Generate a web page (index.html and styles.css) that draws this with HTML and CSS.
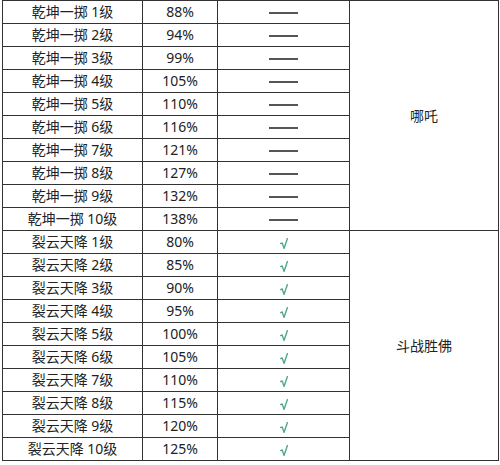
FILE: index.html
```html
<!DOCTYPE html>
<html lang="zh">
<head>
<meta charset="utf-8">
<link rel="stylesheet" href="styles.css">
</head>
<body>
<table class="skills">
<colgroup><col class="c1"><col class="c2"><col class="c3"><col class="c4"></colgroup>
<tbody>
<tr><td>乾坤一掷 1级</td><td>88%</td><td><span class="dash"></span></td><td rowspan="10" class="who">哪吒</td></tr>
<tr><td>乾坤一掷 2级</td><td>94%</td><td><span class="dash"></span></td></tr>
<tr><td>乾坤一掷 3级</td><td>99%</td><td><span class="dash"></span></td></tr>
<tr><td>乾坤一掷 4级</td><td>105%</td><td><span class="dash"></span></td></tr>
<tr><td>乾坤一掷 5级</td><td>110%</td><td><span class="dash"></span></td></tr>
<tr><td>乾坤一掷 6级</td><td>116%</td><td><span class="dash"></span></td></tr>
<tr><td>乾坤一掷 7级</td><td>121%</td><td><span class="dash"></span></td></tr>
<tr><td>乾坤一掷 8级</td><td>127%</td><td><span class="dash"></span></td></tr>
<tr><td>乾坤一掷 9级</td><td>132%</td><td><span class="dash"></span></td></tr>
<tr><td>乾坤一掷 10级</td><td>138%</td><td><span class="dash"></span></td></tr>
<tr><td>裂云天降 1级</td><td>80%</td><td><svg class="ok" viewBox="0 0 8 11" width="8" height="11"><path d="M0.6 5.6 L2.2 5 L4 10.4 L7.4 0.6"/></svg></td><td rowspan="10" class="who">斗战胜佛</td></tr>
<tr><td>裂云天降 2级</td><td>85%</td><td><svg class="ok" viewBox="0 0 8 11" width="8" height="11"><path d="M0.6 5.6 L2.2 5 L4 10.4 L7.4 0.6"/></svg></td></tr>
<tr><td>裂云天降 3级</td><td>90%</td><td><svg class="ok" viewBox="0 0 8 11" width="8" height="11"><path d="M0.6 5.6 L2.2 5 L4 10.4 L7.4 0.6"/></svg></td></tr>
<tr><td>裂云天降 4级</td><td>95%</td><td><svg class="ok" viewBox="0 0 8 11" width="8" height="11"><path d="M0.6 5.6 L2.2 5 L4 10.4 L7.4 0.6"/></svg></td></tr>
<tr><td>裂云天降 5级</td><td>100%</td><td><svg class="ok" viewBox="0 0 8 11" width="8" height="11"><path d="M0.6 5.6 L2.2 5 L4 10.4 L7.4 0.6"/></svg></td></tr>
<tr><td>裂云天降 6级</td><td>105%</td><td><svg class="ok" viewBox="0 0 8 11" width="8" height="11"><path d="M0.6 5.6 L2.2 5 L4 10.4 L7.4 0.6"/></svg></td></tr>
<tr><td>裂云天降 7级</td><td>110%</td><td><svg class="ok" viewBox="0 0 8 11" width="8" height="11"><path d="M0.6 5.6 L2.2 5 L4 10.4 L7.4 0.6"/></svg></td></tr>
<tr><td>裂云天降 8级</td><td>115%</td><td><svg class="ok" viewBox="0 0 8 11" width="8" height="11"><path d="M0.6 5.6 L2.2 5 L4 10.4 L7.4 0.6"/></svg></td></tr>
<tr><td>裂云天降 9级</td><td>120%</td><td><svg class="ok" viewBox="0 0 8 11" width="8" height="11"><path d="M0.6 5.6 L2.2 5 L4 10.4 L7.4 0.6"/></svg></td></tr>
<tr><td>裂云天降 10级</td><td>125%</td><td><svg class="ok" viewBox="0 0 8 11" width="8" height="11"><path d="M0.6 5.6 L2.2 5 L4 10.4 L7.4 0.6"/></svg></td></tr>
</tbody>
</table>
</body>
</html>
```
FILE: styles.css
```css
html, body {
  margin: 0;
  padding: 0;
  background: #fff;
}
body {
  font-family: "Noto Sans", "Noto Sans CJK SC", sans-serif;
  font-size: 14px;
  color: #222;
}
.skills {
  border-collapse: collapse;
  table-layout: fixed;
  width: 496px;
  margin: 0 0 0 2px;
}
.c1 { width: 140px; }
.c2 { width: 75px; }
.c3 { width: 132px; }
.c4 { width: 149px; }
.skills td {
  border: 1px solid #333;
  height: 22px;
  padding: 0;
  text-align: center;
  vertical-align: middle;
  line-height: 22px;
  white-space: nowrap;
}
.dash {
  display: inline-block;
  width: 29px;
  height: 0;
  border-top: 2px solid #555;
  vertical-align: middle;
}
.ok {
  display: inline-block;
  vertical-align: middle;
  fill: none;
  stroke: #52a98a;
  stroke-width: 1.4;
  stroke-linejoin: round;
  stroke-linecap: round;
}
.who {
  color: #222;
}
```
